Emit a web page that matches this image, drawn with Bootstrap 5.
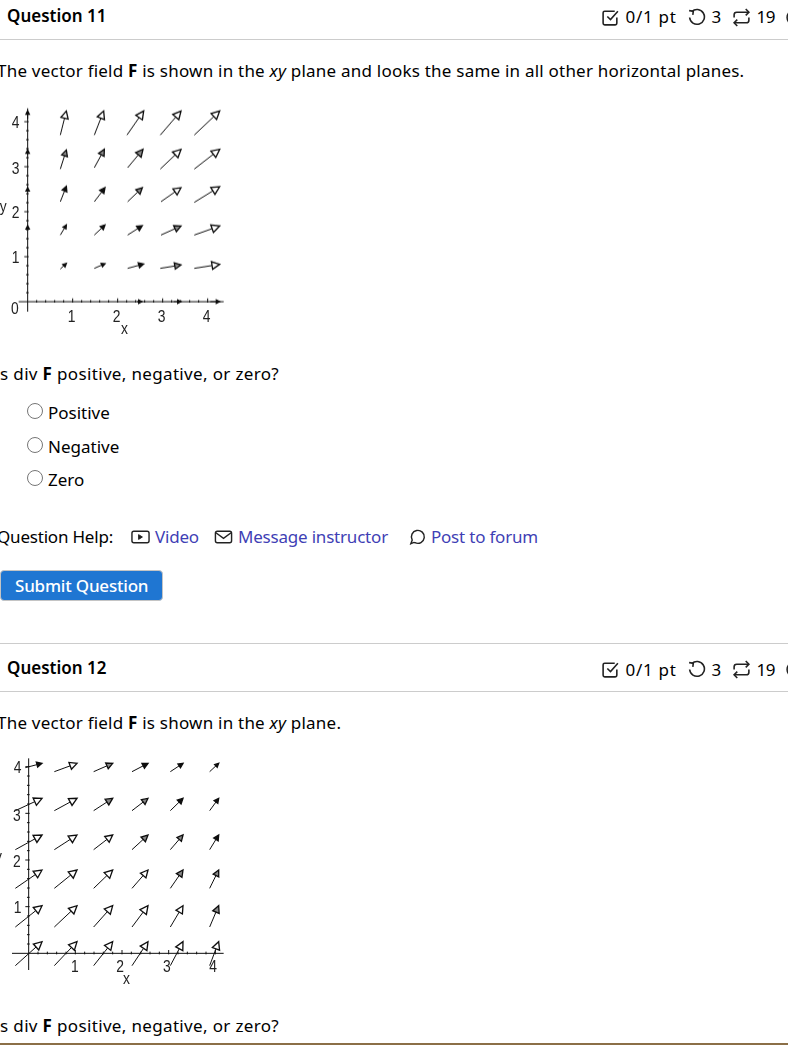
<!DOCTYPE html>
<html lang="en">
<head>
    <meta charset="UTF-8">
    <title>Question 11</title>
    <link href="https://cdn.jsdelivr.net/npm/bootstrap@5.3.0/dist/css/bootstrap.min.css" rel="stylesheet">
    <style>
        html, body { height: 1045px; overflow: hidden; }
        body { font-family: "Noto Sans", sans-serif; font-size: 17px; letter-spacing: .22px; color: #000; background: #fff; }
        .quiz-wrap { width: 807px; margin-left: -3px; }
        .q-head { height: 40px; padding: 0 0 8px 10px; border-bottom: 1px solid #ccc; }
        .q-head.next-q { height: 49px; padding-bottom: 0; border-top: 1px solid #ccc; margin-top: 42px; }
        .q-title { font-weight: 600; font-size: 17px; letter-spacing: 0; }
        .q-stats { gap: 10px; padding-top: 3px; }
        .q-head.next-q .q-stats { padding-top: 4px; }
        .q-stats span { display: inline-flex; align-items: center; gap: 6px; }
        .q-stats svg { width: 19px; height: 19px; }
        .q-stats .stat-score { letter-spacing: .7px; }
        .q-stats .stat-count { letter-spacing: -.5px; }
        .q-text { margin: 0; line-height: 24px; }
        .is-line { margin-left: -3px; letter-spacing: .34px; }
        .gap-text { margin-top: 19px; }
        .gap-plot1 { margin-top: 12px; }
        .gap-plot2 { margin-top: 10px; }
        .gap-after1 { margin-top: 17px; }
        .gap-after2 { margin-top: 19px; }
        .plot { display: block; width: 240px; height: 250px; }
        .plot text { font-family: "Liberation Sans", sans-serif; font-size: 52px; fill: #222; }
        .choice-list { margin-top: 10px; }
        .choice-row { display: flex; align-items: center; gap: 5px; height: 33.5px; padding-left: 30px; letter-spacing: 0; }
        .choice-row input { width: 16px; height: 16px; margin: 0 0 3px; accent-color: #777; }
        .help-row { display: flex; align-items: center; height: 24px; margin-top: 28.5px; letter-spacing: -.2px; }
        .help-row a { color: #3f3fb5; text-decoration: none; display: inline-flex; align-items: center; gap: 5px; }
        .help-row svg { width: 19px; height: 18px; color: #222; }
        .help-video { margin-left: 18px; }
        .help-msg { margin-left: 15px; }
        .help-post { margin-left: 19px; }
        .btn-submit { display: block; margin: 21px 0 0 3px; background: #1f76d2; border: 1px solid #c4c4c4; color: #fff; font-weight: 500; font-size: 17px; letter-spacing: -.2px; padding: 0 14px; height: 31px; line-height: 28px; border-radius: 4px; }
        .btn-submit:hover { background: #1f76d2; color: #fff; }
        .page-end { margin-top: 5px; border-top: 2px solid #8b6f47; }
    </style>
</head>
<body>
<div class="quiz-wrap">

    <div class="q-head d-flex align-items-center">
        <div class="q-title">Question 11</div>
        <div class="q-stats d-flex align-items-center ms-auto">
            <span class="stat-score"><svg viewBox="0 0 18 18" fill="none" stroke="#222" stroke-width="1.5"><path d="M15 9v5.500a1.500 1.500 0 0 1-1.500 1.500h-10A1.500 1.500 0 0 1 2 14.500v-10A1.500 1.500 0 0 1 3.500 3H13"/><path d="M6 8l3 3 7-8"/></svg>0/1 pt</span>
            <span><svg viewBox="0 0 18 18" fill="none" stroke="#222" stroke-width="1.5"><path d="M4.500 3.500A7 7 0 1 1 2.500 9"/><path d="M2 2.500l4 .5-.5 3.500"/></svg>3</span>
            <span class="stat-count"><svg viewBox="0 0 18 18" fill="none" stroke="#222" stroke-width="1.5"><path d="M2 9V6.500A2.500 2.500 0 0 1 4.500 4H16"/><path d="M13 1l3 3-3 3"/><path d="M16 9v2.500a2.500 2.500 0 0 1-2.500 2.500H2"/><path d="M5 11l-3 3 3 3"/></svg>19</span>
            <span><svg viewBox="0 0 18 18" fill="none" stroke="#222" stroke-width="1.5"><circle cx="9" cy="9" r="7"/></svg></span>
        </div>
    </div>

    <p class="q-text gap-text">The vector field <b>F</b> is shown in the <i>xy</i> plane and looks the same in all other horizontal planes.</p>
    <svg class="plot gap-plot1" id="plot1" viewBox="0 0 720 750"></svg>
    <p class="q-text is-line gap-after1">Is div <b>F</b> positive, negative, or zero?</p>

    <div class="choice-list">
        <label class="choice-row"><input type="radio" name="q11">Positive</label>
        <label class="choice-row"><input type="radio" name="q11">Negative</label>
        <label class="choice-row"><input type="radio" name="q11">Zero</label>
    </div>

    <div class="help-row">
        <span>Question Help:</span>
        <a href="#" class="help-video"><svg viewBox="0 0 20 18" fill="none" stroke="currentColor" stroke-width="1.5"><rect x="1" y="3" width="18" height="12" rx="2"/><path d="M8 6.500v5l4-2.500z" fill="currentColor" stroke-width="1"/></svg><span>Video</span></a>
        <a href="#" class="help-msg"><svg viewBox="0 0 20 18" fill="none" stroke="currentColor" stroke-width="1.5"><rect x="1.500" y="3" width="17" height="12" rx="2"/><path d="M2 4.500l8 6 8-6"/></svg><span>Message instructor</span></a>
        <a href="#" class="help-post"><svg viewBox="0 0 20 18" fill="none" stroke="currentColor" stroke-width="1.5"><path d="M4 16l1.500-3.800A6.800 6.800 0 1 1 8.500 15a6.800 6.800 0 0 1-1.200-.3z"/></svg><span>Post to forum</span></a>
    </div>

    <button class="btn btn-submit" type="button">Submit Question</button>

    <div class="q-head next-q d-flex align-items-center">
        <div class="q-title">Question 12</div>
        <div class="q-stats d-flex align-items-center ms-auto">
            <span class="stat-score"><svg viewBox="0 0 18 18" fill="none" stroke="#222" stroke-width="1.5"><path d="M15 9v5.500a1.500 1.500 0 0 1-1.500 1.500h-10A1.500 1.500 0 0 1 2 14.500v-10A1.500 1.500 0 0 1 3.500 3H13"/><path d="M6 8l3 3 7-8"/></svg>0/1 pt</span>
            <span><svg viewBox="0 0 18 18" fill="none" stroke="#222" stroke-width="1.5"><path d="M4.500 3.500A7 7 0 1 1 2.500 9"/><path d="M2 2.500l4 .5-.5 3.500"/></svg>3</span>
            <span class="stat-count"><svg viewBox="0 0 18 18" fill="none" stroke="#222" stroke-width="1.5"><path d="M2 9V6.500A2.500 2.500 0 0 1 4.500 4H16"/><path d="M13 1l3 3-3 3"/><path d="M16 9v2.500a2.500 2.500 0 0 1-2.500 2.500H2"/><path d="M5 11l-3 3 3 3"/></svg>19</span>
            <span><svg viewBox="0 0 18 18" fill="none" stroke="#222" stroke-width="1.5"><circle cx="9" cy="9" r="7"/></svg></span>
        </div>
    </div>

    <p class="q-text gap-text">The vector field <b>F</b> is shown in the <i>xy</i> plane.</p>
    <svg class="plot gap-plot2" id="plot2" viewBox="0 0 720 750"></svg>
    <p class="q-text is-line gap-after2">Is div <b>F</b> positive, negative, or zero?</p>
    <div class="page-end"></div>
</div>

<script src="https://cdn.jsdelivr.net/npm/bootstrap@5.3.0/dist/js/bootstrap.bundle.min.js"></script>
<script>
    // arrows are [x1, y1, x2, y2] in zoomed plot units (3 units = 1px)
    const plot1 = {
        id: 'plot1',
        axes: [[65, 620, 680, 620], [92, 40, 92, 650]],
        xTicks: [225, 360, 495, 630], yTicks: [487, 352, 218, 85], origin: [92, 620],
        labels: [['0', 42, 658], ['1', 212, 680], ['2', 347, 680], ['3', 482, 680], ['4', 617, 680],
                 ['4', 44, 100], ['3', 44, 236], ['2', 44, 370], ['1', 44, 503], ['x', 372, 718], ['y', 8, 350]],
        arrows: [
            [190,120,208,48],[292,120,320,48],[390,120,440,48],[490,120,552,48],[592,120,668,48],
            [190,222,208,165],[292,218,322,163],[392,218,438,163],[490,222,552,163],[592,222,668,163],
            [190,320,208,274],[292,320,324,278],[392,320,436,278],[492,320,552,278],[592,322,668,275],
            [190,420,208,390],[292,420,324,390],[392,420,436,392],[492,420,552,393],[592,420,668,393],
            [190,522,208,505],[292,520,324,506],[392,520,440,507],[490,520,552,510],[592,520,668,508],
            [92,72,92,48],[92,180,92,165],[92,290,92,278],[92,402,92,392],
            [420,620,435,620],[530,620,552,620],[640,620,668,620]
        ]
    };

    const tails2 = [55, 172, 290, 405, 520, 638];
    const heads2 = [135, 240, 347, 453, 558, 665];
    const rows2 = [[80, 55], [197, 160], [314, 270], [430, 375], [546, 482], [662, 590]];
    const arrows2 = [];
    rows2.forEach(r => tails2.forEach((t, i) => arrows2.push([t, r[0], heads2[i], r[1]])));
    arrows2[0] = [85, 68, 135, 55];

    const plot2 = {
        id: 'plot2',
        axes: [[45, 625, 680, 625], [95, 40, 95, 675]],
        xTicks: [232, 372, 513, 652], yTicks: [485, 345, 205, 67], origin: [95, 625],
        labels: [['1', 222, 682], ['2', 358, 682], ['3', 498, 682], ['4', 637, 682],
                 ['4', 50, 85], ['3', 48, 228], ['2', 48, 365], ['1', 50, 505], ['x', 378, 718], ['y', -6, 350]],
        arrows: arrows2
    };

    function arrowMarkup(a) {
        const dx = a[2] - a[0], dy = a[3] - a[1];
        const len = Math.hypot(dx, dy), ux = dx / len, uy = dy / len;
        const h = Math.min(24, Math.max(10, len * 0.3)), w = h * 0.5;
        const bx = a[2] - ux * h, by = a[3] - uy * h;
        const pts = [[a[2], a[3]], [bx - uy * w, by + ux * w], [bx + uy * w, by - ux * w]]
            .map(p => p.join(',')).join(' ');
        // small heads close up, middle ones only show a bit of white
        const fill = len < 56 ? '#111' : (len < 72 ? '#888' : '#fff');
        return `<line x1="${a[0]}" y1="${a[1]}" x2="${bx}" y2="${by}" stroke="#111" stroke-width="3"/>` +
            `<polygon points="${pts}" fill="${fill}" stroke="#111" stroke-width="4"/>`;
    }

    function drawPlot(p) {
        let out = '<filter id="soft-' + p.id + '"><feGaussianBlur stdDeviation="1.2"/></filter>';
        out += '<g filter="url(#soft-' + p.id + ')">';
        p.axes.forEach(a => {
            out += `<line x1="${a[0]}" y1="${a[1]}" x2="${a[2]}" y2="${a[3]}" stroke="#111" stroke-width="3"/>`;
        });
        // minor ticks, five to a unit, only as far as the axes reach
        const [ox, oy] = p.origin;
        const stepX = (p.xTicks[1] - p.xTicks[0]) / 5, stepY = (p.yTicks[0] - p.yTicks[1]) / 5;
        for (let i = 1; i <= 22; i++) {
            const big = i % 5 === 0;
            const tx = ox + i * stepX, ty = oy - i * stepY;
            if (tx < p.axes[0][2]) out += `<line x1="${tx}" y1="${oy - (big ? 10 : 5)}" x2="${tx}" y2="${oy + 3}" stroke="#111" stroke-width="3"/>`;
            if (ty > p.axes[1][1]) out += `<line x1="${ox - (big ? 10 : 5)}" y1="${ty}" x2="${ox + 3}" y2="${ty}" stroke="#111" stroke-width="3"/>`;
        }
        p.arrows.forEach(a => { out += arrowMarkup(a); });
        // digits in the picture are tall and narrow
        p.labels.forEach(l => { out += `<text transform="translate(${l[1]} ${l[2]}) scale(.8 1)">${l[0]}</text>`; });
        out += '</g>';
        document.getElementById(p.id).innerHTML = out;
    }

    drawPlot(plot1);
    drawPlot(plot2);
</script>
</body>
</html>
